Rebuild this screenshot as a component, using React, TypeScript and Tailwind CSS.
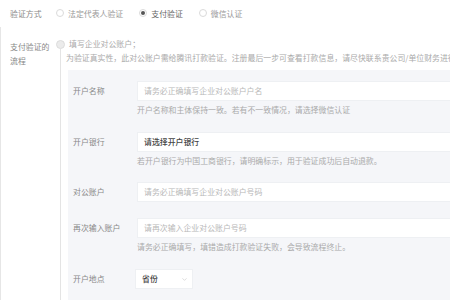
import { ChevronDown } from "lucide-react";

const fields = [
  {
    label: "开户名称",
    value: "请务必正确填写企业对公账户户名",
    hint: "开户名称和主体保持一致。若有不一致情况，请选择微信认证",
    gap: "mt-0",
    filled: false,
  },
  {
    label: "开户银行",
    value: "请选择开户银行",
    hint: "若开户银行为中国工商银行，请明确标示，用于验证成功后自动退款。",
    gap: "mt-[17px]",
    filled: true,
  },
  {
    label: "对公账户",
    value: "请务必正确填写企业对公账户号码",
    hint: "",
    gap: "mt-[16px]",
    filled: false,
  },
  {
    label: "再次输入账户",
    value: "请再次输入企业对公账户号码",
    hint: "请务必正确填写，填错造成打款验证失败，会导致流程终止。",
    gap: "mt-[16px]",
    filled: false,
  },
];

function Radio({ checked, label }: { checked?: boolean; label: string }) {
  return (
    <div className="flex items-center gap-[4px]">
      <span className="flex h-[8px] w-[8px] items-center justify-center rounded-full border border-[#dadada] bg-white">
        {checked && <span className="h-[4px] w-[4px] rounded-full bg-[#555]" />}
      </span>
      <span className={checked ? "text-[#666]" : "text-[#999]"}>{label}</span>
    </div>
  );
}

export default function App() {
  return (
    <div
      className="relative h-[300px] w-[450px] overflow-hidden bg-white text-[7.9px] text-[#888]"
      style={{ fontFamily: '"Noto Sans CJK SC", "Noto Sans", sans-serif' }}
    >
      <div className="flex h-[27px] items-center pl-[10px]">
        <span className="w-[46px]">验证方式</span>
        <div className="flex items-center gap-[16px]">
          <Radio label="法定代表人验证" />
          <Radio checked label="支付验证" />
          <Radio label="微信认证" />
        </div>
      </div>

      <div className="flex h-[273px] border-l border-[#e6e6e6]">
        <div className="w-[54px] pl-[9px] pt-[13px] leading-[14px]">
          支付验证的
          <br />
          流程
        </div>

        <div className="flex w-[10px] flex-col items-center pt-[13px]">
          <span className="h-[9px] w-[9px] rounded-full border border-[#dcdcdc] bg-[#ebebeb]" />
          <span className="w-px flex-1 bg-[#e4e4e4]" />
        </div>

        <div className="flex min-w-0 flex-1 flex-col pl-[3px]">
          <div className="whitespace-nowrap pt-[10px] leading-[14px] text-[#aaa]">
            <div className="pl-[1px]">填写企业对公账户；</div>
            <div className="-ml-[2px]">
              为验证真实性，此对公账户需给腾讯打款验证。注册最后一步可查看打款信息，请尽快联系贵公司/单位财务进行打款
            </div>
          </div>

          <div className="mt-[5px] flex-1 overflow-hidden bg-[#f5f6f9] pl-[5px] pt-[11px]">
            {fields.map((f) => (
              <div key={f.label} className={f.gap}>
                <div className="flex h-[20px] items-center">
                  <span className="w-[64px] shrink-0">{f.label}</span>
                  <div
                    className={`flex h-[20px] w-[330px] shrink-0 items-center border border-[#eef0f3] bg-white pl-[6px] whitespace-nowrap ${
                      f.filled ? "font-medium text-[#444]" : "text-[#b8b8b8]"
                    }`}
                  >
                    {f.value}
                  </div>
                </div>
                {f.hint && (
                  <div className="mt-[4px] whitespace-nowrap pl-[64px] leading-[10px] text-[#aaa]">
                    {f.hint}
                  </div>
                )}
              </div>
            ))}

            <div className="mt-[17px] flex h-[20px] items-center">
              <span className="w-[62px] shrink-0">开户地点</span>
              <div className="flex h-[20px] w-[58px] items-center justify-between border border-[#eef0f3] bg-white pl-[6px] pr-[4px] font-medium text-[#444]">
                <span>省份</span>
                <ChevronDown size={7} strokeWidth={2} className="text-[#c4c4c4]" />
              </div>
            </div>
          </div>
        </div>
      </div>
    </div>
  );
}
